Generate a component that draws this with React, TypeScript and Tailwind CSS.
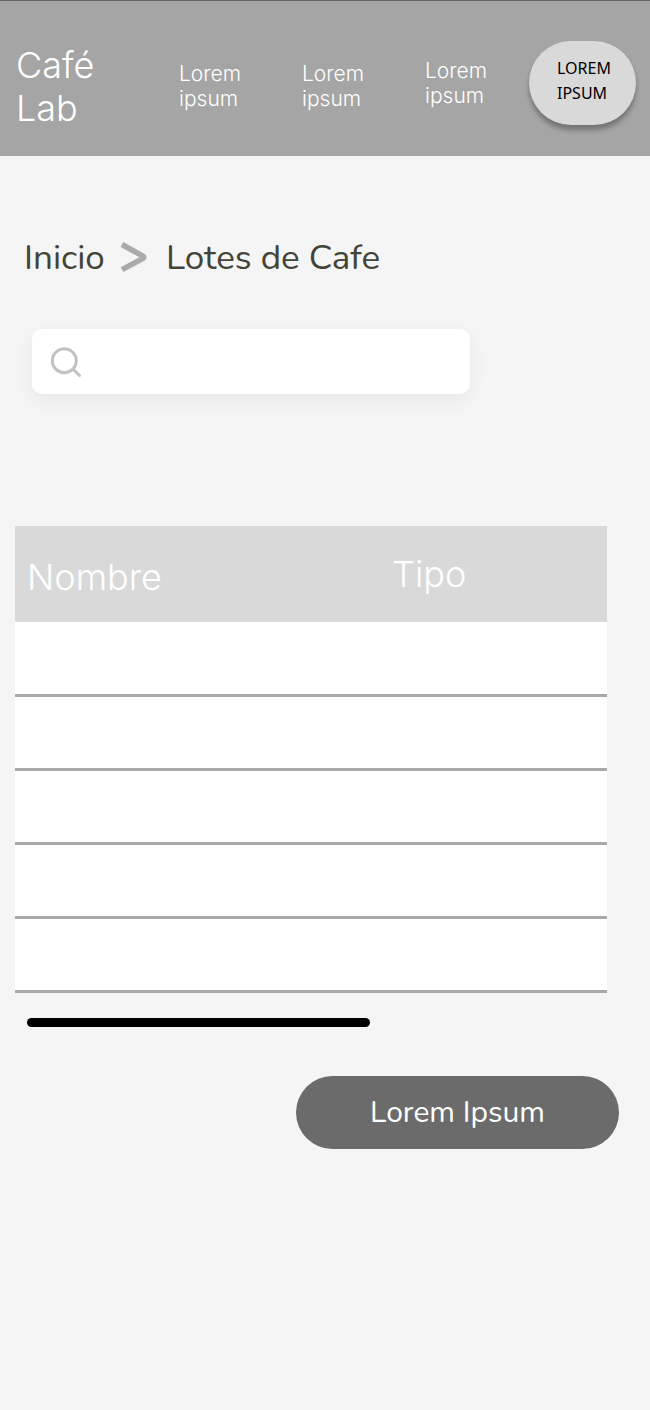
const rows = [1, 2, 3, 4, 5];

function NavLink() {
  return (
    <a
      href="#"
      className="font-['Inter',sans-serif] text-[21px] leading-[25px] font-light text-white"
    >
      Lorem
      <br />
      ipsum
    </a>
  );
}

function Header() {
  return (
    <header className="border-t border-[#666666] bg-[#a5a5a5] pt-[35px] pr-[14px] pb-[26px] pl-4">
      <nav className="grid grid-cols-[163fr_123fr_123fr_104fr_107px] items-center">
        <a
          href="#"
          className="pt-2 font-['Inter',sans-serif] text-4xl leading-[43px] font-light text-white"
        >
          Café
          <br />
          Lab
        </a>
        <div className="flex pt-1.5">
          <NavLink />
        </div>
        <div className="flex pt-1.5">
          <NavLink />
        </div>
        <div className="flex">
          <NavLink />
        </div>
        <button
          type="button"
          className="h-[84px] rounded-full bg-[#d9d9d9] pr-4 pb-1 pl-7 text-left font-['Noto_Sans',sans-serif] text-base leading-[25px] text-black shadow-[0_5px_5px_rgba(0,0,0,0.3)]"
        >
          LOREM
          <br />
          IPSUM
        </button>
      </nav>
    </header>
  );
}

function Breadcrumb() {
  return (
    <nav
      aria-label="Breadcrumb"
      className="flex items-center px-6 font-['Nunito','Lato',sans-serif] text-[35px] leading-[48px] text-[#434337]"
    >
      <a href="#" className="w-24 pt-0.5">
        Inicio
      </a>
      <svg width="27" height="32" viewBox="0 0 27 32" fill="none" aria-hidden="true">
        <path
          d="M2 3.5L23 15.2Q24.6 16.3 23 17.4L2 28.7"
          stroke="#aaaaaa"
          strokeWidth="5.5"
          strokeLinejoin="round"
        />
      </svg>
      <span className="pt-0.5 pl-[19px]">Lotes de Cafe</span>
    </nav>
  );
}

function SearchBox() {
  return (
    <label className="mx-8 mt-[47px] flex h-[65px] max-w-[438px] items-center rounded-[10px] bg-white pl-[18px] shadow-[0_6px_20px_rgba(0,0,0,0.06)]">
      <svg
        width="32"
        height="32"
        viewBox="0 0 32 32"
        fill="none"
        stroke="#c2c2c2"
        strokeWidth="3"
        strokeLinecap="round"
        aria-hidden="true"
      >
        <circle cx="14.3" cy="14.7" r="12" />
        <path d="M23.5 23.7L29.5 29.5" />
      </svg>
      <input
        type="search"
        aria-label="Buscar"
        className="h-full min-w-0 flex-1 bg-transparent px-4 text-2xl outline-none"
      />
    </label>
  );
}

function LotesTable() {
  return (
    <table className="w-full table-fixed border-separate border-spacing-0 bg-white font-['Inter',sans-serif]">
      <thead>
        <tr className="text-left text-4xl leading-[44px] text-white">
          <th className="h-[97px] w-[62%] border-b border-white bg-[#d9d9d9] pt-1.5 pl-3 font-light">
            Nombre
          </th>
          <th className="border-b border-white bg-[#d9d9d9] pl-2.5 font-light">Tipo</th>
        </tr>
      </thead>
      <tbody>
        {rows.map((row) => (
          <tr key={row}>
            <td className="h-[74px] border-b-3 border-[#a9a9a9]" />
            <td className="border-b-3 border-[#a9a9a9]" />
          </tr>
        ))}
      </tbody>
    </table>
  );
}

export default function App() {
  return (
    <div className="min-h-screen bg-[#f5f5f5]">
      <Header />
      <main className="pt-[76px] pb-16">
        <Breadcrumb />
        <SearchBox />
        <section className="mt-[132px] mr-[43px] ml-[15px]">
          <LotesTable />
          <div className="mt-[25px] ml-3 h-[9px] w-[58%] rounded-full bg-black" />
        </section>
        <div className="mt-[49px] flex justify-end pr-[31px]">
          <button
            type="button"
            className="h-[73px] w-[323px] rounded-full bg-[#6b6b6b] font-['Nunito','Lato',sans-serif] text-3xl text-white"
          >
            Lorem Ipsum
          </button>
        </div>
      </main>
    </div>
  );
}
